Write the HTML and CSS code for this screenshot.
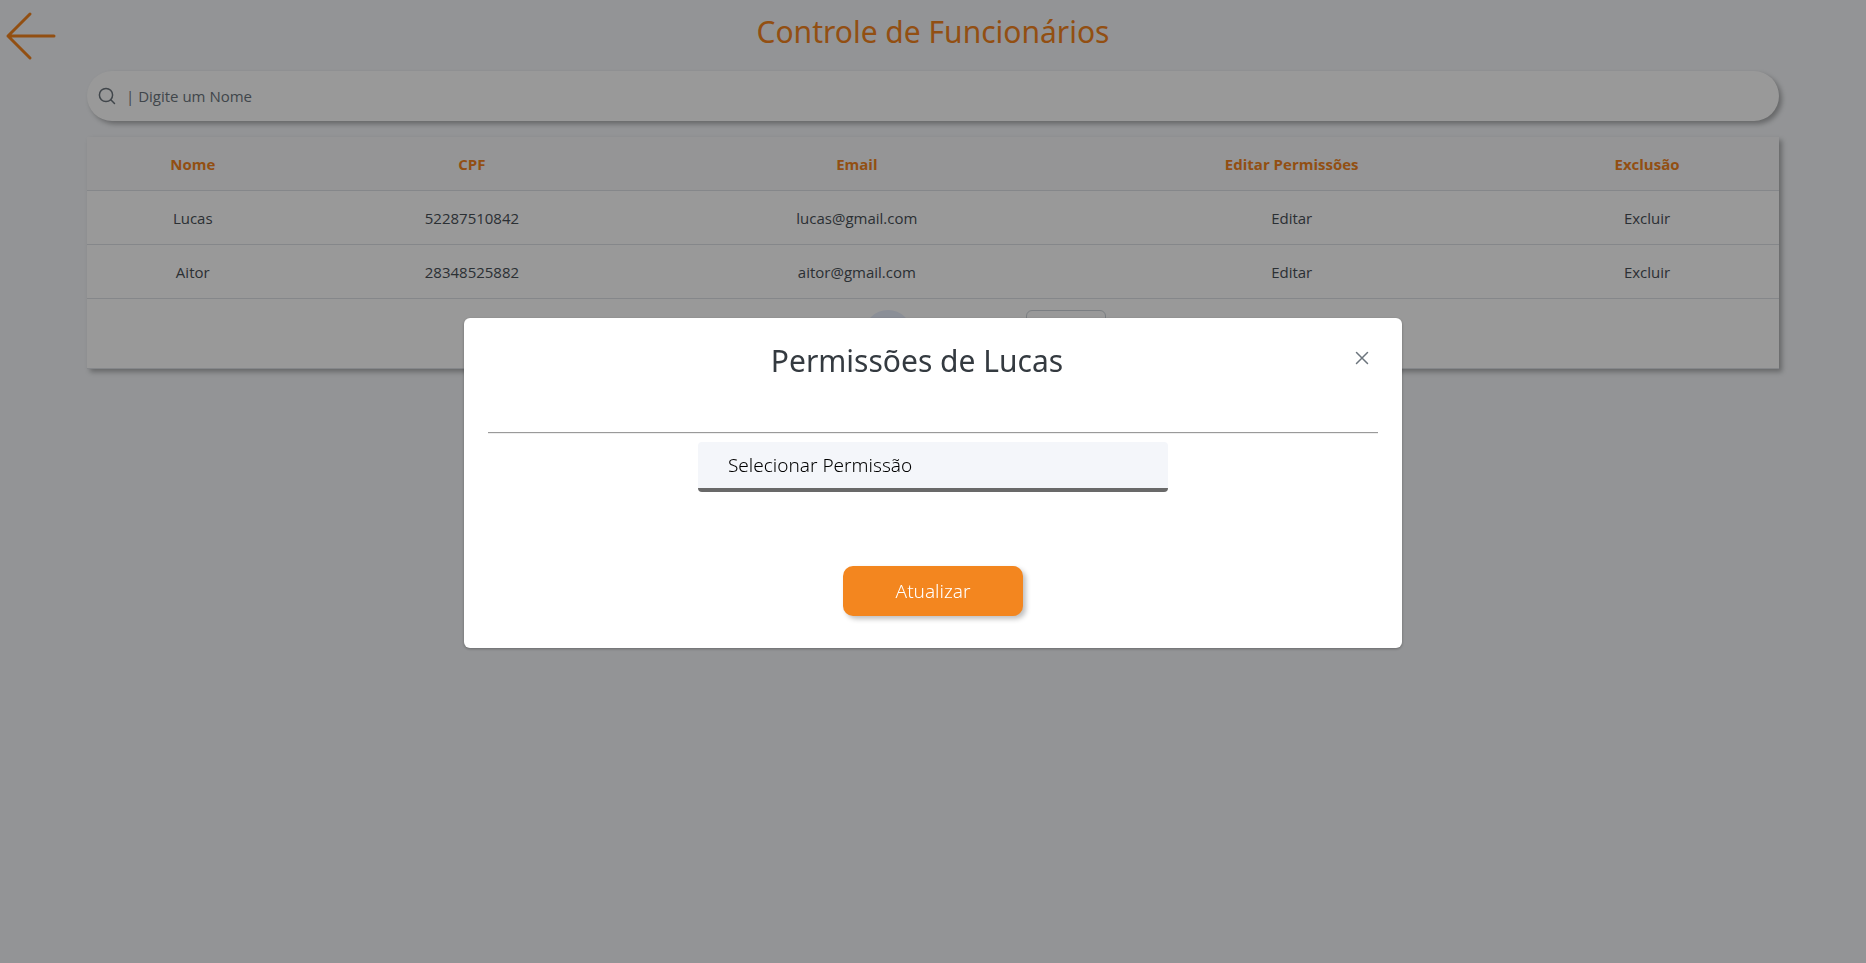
FILE: index.html
```html
<!DOCTYPE html>
<html lang="pt-BR">
<head>
<meta charset="utf-8">
<meta name="viewport" content="width=device-width, initial-scale=1">
<title>Controle de Funcionários</title>
<link rel="stylesheet" href="styles.css">
</head>
<body>
<header class="topbar">
  <button class="back" type="button" aria-label="Voltar">
    <svg width="52" height="52" viewBox="0 0 52 52" fill="none" stroke="currentColor" stroke-width="3" stroke-linecap="round" stroke-linejoin="round"><path d="M25 4 3 26l22 22M3 26h46"/></svg>
  </button>
  <h1 class="page-title">Controle de Funcionários</h1>
</header>
<main class="content">
  <label class="search">
    <svg class="search-icon" width="18" height="18" viewBox="0 0 18 18" fill="none" stroke="currentColor" stroke-width="1.5" stroke-linecap="round"><circle cx="8" cy="8" r="6.6"/><path d="m12.8 12.8 3.7 3.7"/></svg>
    <input class="search-input" type="text" placeholder="| Digite um Nome" aria-label="Digite um Nome">
  </label>
  <section class="card">
    <table class="staff">
      <colgroup><col class="c-name"><col class="c-cpf"><col class="c-email"><col class="c-edit"><col class="c-delete"></colgroup>
      <thead>
        <tr><th>Nome</th><th>CPF</th><th>Email</th><th>Editar Permissões</th><th>Exclusão</th></tr>
      </thead>
      <tbody>
        <tr><td>Lucas</td><td>52287510842</td><td>lucas@gmail.com</td><td><button class="cell-action" type="button">Editar</button></td><td><button class="cell-action" type="button">Excluir</button></td></tr>
        <tr><td>Aitor</td><td>28348525882</td><td>aitor@gmail.com</td><td><button class="cell-action" type="button">Editar</button></td><td><button class="cell-action" type="button">Excluir</button></td></tr>
      </tbody>
    </table>
    <nav class="paginator" aria-label="Paginação">
      <button class="page" type="button" aria-label="Primeira"></button>
      <button class="page" type="button" aria-label="Anterior"></button>
      <button class="page current" type="button" aria-label="Página 1"></button>
      <button class="page" type="button" aria-label="Próxima"></button>
      <button class="page" type="button" aria-label="Última"></button>
      <select class="page-size" aria-label="Linhas por página"></select>
    </nav>
  </section>
</main>
<div class="overlay">
  <div class="dialog" role="dialog" aria-modal="true" aria-labelledby="dialog-title">
    <div class="dialog-head">
      <h2 class="dialog-title" id="dialog-title">Permissões de Lucas</h2>
      <button class="close" type="button" aria-label="Fechar">
        <svg width="14" height="14" viewBox="0 0 14 14" fill="none" stroke="currentColor" stroke-width="1.5" stroke-linecap="round"><path d="m1.5 1.5 11 11M12.5 1.5l-11 11"/></svg>
      </button>
    </div>
    <hr class="rule">
    <form class="dialog-form">
      <select class="permission" aria-label="Selecionar Permissão"><option>Selecionar Permissão</option></select>
      <button class="submit" type="button">Atualizar</button>
    </form>
  </div>
</div>
</body>
</html>
```
FILE: styles.css
```css
* { box-sizing: border-box; }

body {
  margin: 0;
  min-height: 100vh;
  background: #f5f7fa;
  color: #495057;
  font: 15px/22px "Open Sans", "Noto Sans", sans-serif;
}

button, input, select { font: inherit; }

button {
  border: 0;
  background: none;
  padding: 0;
  color: inherit;
  cursor: pointer;
}

.topbar {
  display: grid;
  grid-template-columns: 88px 1fr 88px;
  height: 71px;
}

.back {
  justify-self: start;
  align-self: center;
  height: 52px;
  margin-left: 5px;
  color: #f3841e;
}

.page-title {
  margin: 0;
  padding-top: 10px;
  text-align: center;
  color: #f3841e;
  font: 400 30px/44px "Noto Sans", sans-serif;
}

.content {
  display: flex;
  flex-direction: column;
  gap: 16px;
  padding: 0 87px;
}

.search {
  display: flex;
  align-items: center;
  gap: 10px;
  height: 50px;
  padding: 0 11px;
  border-radius: 25px;
  background: #fff;
  color: #6c757d;
  box-shadow: 3px 3px 5px rgba(0, 0, 0, 0.3);
}

.search-input {
  flex: 1;
  border: 0;
  outline: 0;
  padding: 0;
  background: none;
}

.search-input::placeholder { color: #6c757d; }

.card {
  background: #fff;
  box-shadow: 3px 3px 5px rgba(0, 0, 0, 0.3);
}

.staff {
  width: 100%;
  table-layout: fixed;
  border-collapse: separate;
  border-spacing: 0;
  text-align: center;
}

.c-name { width: 12.5%; }
.c-cpf { width: 20.5%; }
.c-email { width: 25%; }
.c-edit { width: 26.4%; }
.c-delete { width: 15.6%; }

.staff th, .staff td {
  height: 54px;
  padding: 0 16px;
  border-bottom: 1px solid #dee2e6;
}

.staff th {
  background: #f8f9fa;
  color: #f3841e;
  font-weight: 700;
}

.paginator {
  display: flex;
  justify-content: center;
  align-items: center;
  gap: 4px;
  height: 70px;
  border-bottom: 1px solid #dee2e6;
}

.page {
  width: 48px;
  height: 48px;
  border-radius: 50%;
}

.page.current { background: #e8eefc; }

.page-size {
  width: 80px;
  height: 48px;
  margin-left: 6px;
  border: 1px solid #ced4da;
  border-radius: 6px;
  background: #fff;
  appearance: none;
}

.overlay {
  position: fixed;
  inset: 0;
  display: flex;
  align-items: center;
  justify-content: center;
  padding-top: 2px;
  background: rgba(0, 0, 0, 0.4);
}

.dialog {
  width: 50.3%;
  padding: 24px 24px 32px;
  border-radius: 6px;
  background: #fff;
  box-shadow: 0 1px 3px rgba(0, 0, 0, 0.3);
}

.dialog-head {
  display: flex;
  align-items: flex-start;
  height: 90px;
}

.dialog-title {
  flex: 1;
  margin: 0;
  text-align: center;
  color: #343a40;
  font: 400 30px/38px "Noto Sans", sans-serif;
}

.close {
  display: grid;
  place-items: center;
  width: 32px;
  height: 32px;
  color: #6c757d;
}

.rule {
  margin: 0 0 8px;
  border: 0;
  border-top: 1px solid #9a9a9a;
  border-bottom: 1px solid #eee;
}

.dialog-form {
  display: flex;
  flex-direction: column;
  align-items: center;
  gap: 74px;
}

.permission {
  width: 470px;
  height: 50px;
  padding: 0 30px;
  border: 0;
  border-bottom: 4px solid #696969;
  border-radius: 4px;
  background: #f4f6fa;
  color: #000;
  font: 300 19px/28px "Noto Sans", sans-serif;
  appearance: none;
}

.submit {
  width: 180px;
  height: 50px;
  border-radius: 10px;
  background: #f3861f;
  color: #fff;
  font: 300 19px/28px "Noto Sans", sans-serif;
  box-shadow: 3px 3px 5px rgba(0, 0, 0, 0.25);
}
```
